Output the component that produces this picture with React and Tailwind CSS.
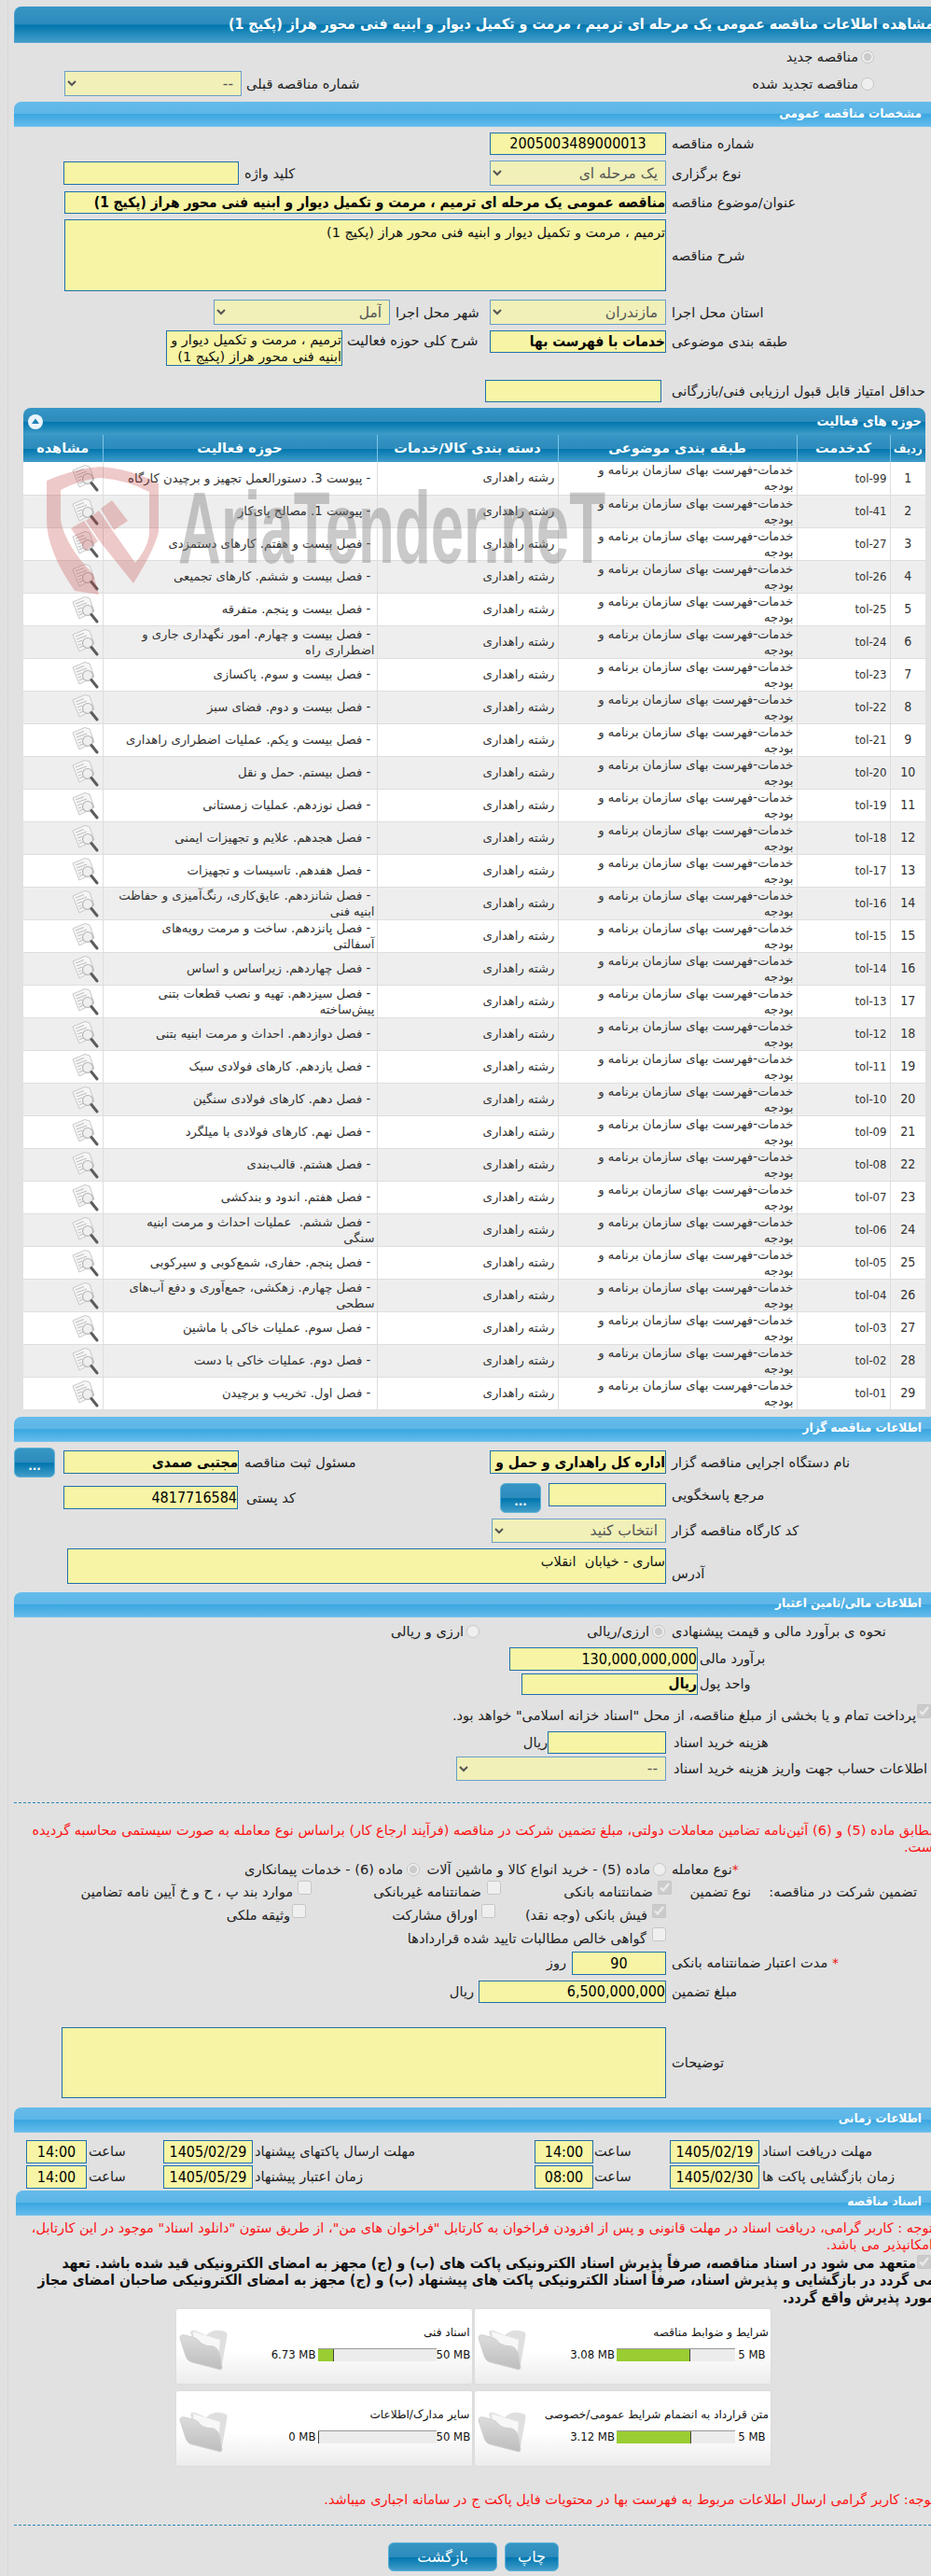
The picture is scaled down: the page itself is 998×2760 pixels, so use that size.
import { useState } from "react";

const rows = [
  ["tol-99", "پیوست 3. دستورالعمل تجهیز و برچیدن کارگاه"],
  ["tol-41", "پیوست 1. مصالح پای‌کار"],
  ["tol-27", "فصل بیست و هفتم. کارهای دستمزدی"],
  ["tol-26", "فصل بیست و ششم. کارهای تجمیعی"],
  ["tol-25", "فصل بیست و پنجم. متفرقه"],
  ["tol-24", "فصل بیست و چهارم. امور نگهداری جاری و\nاضطراری راه"],
  ["tol-23", "فصل بیست و سوم. پاکسازی"],
  ["tol-22", "فصل بیست و دوم. فضای سبز"],
  ["tol-21", "فصل بیست و یکم. عملیات اضطراری راهداری"],
  ["tol-20", "فصل بیستم. حمل و نقل"],
  ["tol-19", "فصل نوزدهم. عملیات زمستانی"],
  ["tol-18", "فصل هجدهم. علایم و تجهیزات ایمنی"],
  ["tol-17", "فصل هفدهم. تاسیسات و تجهیزات"],
  ["tol-16", "فصل شانزدهم. عایق‌کاری، رنگ‌آمیزی و حفاظت\nابنیه فنی"],
  ["tol-15", "فصل پانزدهم. ساخت و مرمت رویه‌های\nآسفالتی"],
  ["tol-14", "فصل چهاردهم. زیراساس و اساس"],
  ["tol-13", "فصل سیزدهم. تهیه و نصب قطعات بتنی\nپیش‌ساخته"],
  ["tol-12", "فصل دوازدهم. احداث و مرمت ابنیه بتنی"],
  ["tol-11", "فصل یازدهم. کارهای فولادی سبک"],
  ["tol-10", "فصل دهم. کارهای فولادی سنگین"],
  ["tol-09", "فصل نهم. کارهای فولادی با میلگرد"],
  ["tol-08", "فصل هشتم. قالب‌بندی"],
  ["tol-07", "فصل هفتم. اندود و بندکشی"],
  ["tol-06", "فصل ششم.  عملیات احداث و مرمت ابنیه\nسنگی"],
  ["tol-05", "فصل پنجم. حفاری، شمع‌کوبی و سپرکوبی"],
  ["tol-04", "فصل چهارم. زهکشی، جمع‌آوری و دفع آب‌های\nسطحی"],
  ["tol-03", "فصل سوم. عملیات خاکی با ماشین"],
  ["tol-02", "فصل دوم. عملیات خاکی با دست"],
  ["tol-01", "فصل اول. تخریب و برچیدن"],
];

const cards = [
  ["شرایط و ضوابط مناقصه", "3.08 MB", "5 MB", 62],
  ["اسناد فنی", "6.73 MB", "50 MB", 14],
  ["متن قرارداد به انضمام شرایط عمومی/خصوصی", "3.12 MB", "5 MB", 63],
  ["سایر مدارک/اطلاعات", "0 MB", "50 MB", 0],
];

const darkBar =
  "bg-[linear-gradient(#3796c5_0%,#2c8bbb_50%,#0076ae_52%,#429dc9_100%)]";
const lightBar =
  "bg-[linear-gradient(#64bbeb_0%,#5db6e7_50%,#3ba7e0_52%,#63bbeb_100%)]";
const cond = "font-['DejaVu_Sans_Condensed','DejaVu_Sans',sans-serif]";

/* ---------------- SMALL PARTS ---------------- */
const Section = ({ title, className = "" }) => (
  <div
    className={`h-[27px] flex items-center pr-[10px] rounded-tl-[8px] border-b border-[#7cc4ea] text-white font-bold text-[13.4px] ${cond} ${lightBar} ${className}`}
  >
    {title}
  </div>
);

const Label = ({ className = "w-[278px]", children }) => (
  <div className={`shrink-0 text-left text-[#222] text-[14.6px] whitespace-nowrap ${className}`}>
    {children}
  </div>
);

const Field = ({ className = "", value = "", bold }) => (
  <input
    readOnly
    value={value}
    className={`shrink-0 px-0 bg-[#f7f5a5] border border-[#1f70aa] text-black outline-none ${cond} ${bold ? "font-bold text-[15.4px]" : "text-[16px]"} ${className}`}
  />
);

const Area = ({ className = "", value = "" }) => (
  <textarea
    readOnly
    value={value}
    className={`shrink-0 px-0 py-0 bg-[#f7f5a5] border border-[#1f70aa] text-[#111] text-[14.5px] leading-[18px] resize-none overflow-hidden outline-none ${className}`}
  />
);

const Choice = ({ value, className = "" }) => (
  <select
    disabled
    defaultValue={value}
    className={`shrink-0 bg-[#f0f0b8] border border-[#6a9ec8] text-[#555] text-[15.5px] px-[4px] opacity-100 ${className}`}
  >
    <option>{value}</option>
  </select>
);

const Dots = ({ className = "" }) => (
  <button
    className={`shrink-0 w-[44px] h-[32px] pt-[8px] rounded-[6px] border border-[#5ab0d8] text-white font-bold text-[12px] ${darkBar} ${className}`}
  >
    ...
  </button>
);

const Radio = ({ checked, className = "" }) => (
  <input type="radio" disabled checked={!!checked} readOnly className={`shrink-0 m-0 w-[14px] h-[14px] ${className}`} />
);

const Check = ({ checked, className = "" }) => (
  <input type="checkbox" disabled checked={!!checked} readOnly className={`shrink-0 m-0 w-[15px] h-[15px] ${className}`} />
);

const Star = () => <span className="text-[#e11] text-[14px]">*</span>;

const ViewIcon = () => (
  <svg width="31" height="30" viewBox="0 0 31 30">
    <path d="M2 7 L15 1.5 L20 3 L25 17 L9 25 Z" fill="#f6f6f6" stroke="#c8c8c8" />
    <path d="M5 9 L14 5.5 M6 12 L17 8 M7 15 L12 13 M8 18 L11 17 M9 21 L13 19" stroke="#c2c2c2" strokeWidth="1.2" />
    <circle cx="18" cy="16" r="5.5" fill="#ececec" fillOpacity="0.75" stroke="#b4b4b4" strokeWidth="1.2" />
    <path d="M22 20.5 L28 28" stroke="#5c5c5c" strokeWidth="3" strokeLinecap="round" />
  </svg>
);

const FolderIcon = () => (
  <svg width="54" height="50" viewBox="0 0 54 50">
    <defs>
      <linearGradient id="folderGrad" x1="0" y1="0" x2="0" y2="1">
        <stop offset="0" stopColor="#dcdcdc" />
        <stop offset="1" stopColor="#bdbdbd" />
      </linearGradient>
    </defs>
    <path d="M12 9 Q13 6 17 7 L29 12 Q33 8 38 7 Q44 6 51 9 Q52 12 51 15 L46 44 L20 30 Z" fill="#dfdfdf" />
    <path d="M15 8 L44 17 L42 38 L17 28 Z" fill="#f7f7f7" />
    <path d="M1 15 Q1 11 6 12 L14 14 Q20 15 24 21 Q29 24 37 24 Q42 26 44 34 L46 47 Q45 50 41 48 L14 41 Q9 40 7 34 Z" fill="url(#folderGrad)" stroke="#cfcfcf" />
  </svg>
);

const FileCard = ({ title, used, max, percent }) => (
  <div className="w-[317px] h-[80px] flex rounded-[2px] bg-[linear-gradient(#ffffff_55%,#ececec_100%)] shadow-[0_0_2px_#cfcfcf]">
    <div className="flex-1 pr-[2px]">
      <div className="mt-[16px] h-[18px] leading-[18px] text-[12.1px] text-[#111] whitespace-nowrap">{title}</div>
      <div className={`mt-[5px] flex items-center text-[13px] text-[#111] ${cond}`}>
        <span className="w-[36px] text-center whitespace-nowrap" dir="ltr">{max}</span>
        <div className="w-[127px] h-[14px] bg-[#ececec] border-t border-[#999]" dir="ltr">
          <div style={{ width: `${percent}%` }} className="h-full bg-[#9acd32] border-r border-[#444] min-w-[1px]" />
        </div>
        <span className="mr-[2px] whitespace-nowrap" dir="ltr">{used}</span>
      </div>
    </div>
    <div className="w-[58px] pt-[16px] pl-[3px] shrink-0 flex justify-end">
      <FolderIcon />
    </div>
  </div>
);

const TimeRow = ({ first, second, d1, t1, d2, t2, className = "" }) => (
  <div className={`flex items-center h-[25px] ${className}`}>
    <Label className="w-[181px]">{first}</Label>
    <Field value={d1} className="mr-[3px] w-[96px] h-full text-center" />
    <Label className="w-[78px] mr-[3px]">ساعت</Label>
    <Field value={t1} className="w-[63px] h-full mr-[1px] text-center" />
    <Label className="w-[298px] mr-[2px]">{second}</Label>
    <Field value={d2} className="mr-[2px] w-[96px] h-full text-center" />
    <Label className="w-[78px] mr-[2px]">ساعت</Label>
    <Field value={t2} className="w-[65px] h-full mr-[2px] text-center" />
  </div>
);

/* ---------------- WATERMARK ---------------- */
const Watermark = () => (
  <>
    <svg className="absolute left-[-5px] top-[53px] pointer-events-none" width="180" height="160" viewBox="0 0 180 160">
      <g fill="#c43c3c" opacity="0.27">
        <path d="M30 25 Q60 12 87 10 Q120 12 150 28 L150 80 Q145 100 123 135 L87 90 L101 79 L125 113 Q140 95 140 80 L140 37 Q115 24 88 22 Q65 24 45 35 L45 67 Q50 95 80 125 L86 147 L60 143 Q30 100 30 67 Z" />
        <path d="M88 55 L100 46 L117 68 L102 78 Z" />
        <path d="M72 68 L86 57 L101 79 L87 90 Z" />
        <path d="M56 76 L70 68 L85 90 L72 100 Z" />
      </g>
    </svg>
    <svg className="absolute left-[160px] top-[70px] pointer-events-none" width="480" height="110" viewBox="0 0 480 110">
      <text
        x="6"
        y="96"
        textLength="458"
        lengthAdjust="spacingAndGlyphs"
        fontSize="110"
        fontWeight="700"
        fontFamily="'Liberation Sans', sans-serif"
        fill="#777"
        opacity="0.38"
        className="[direction:ltr]"
      >
        AriaTender.neT
      </text>
    </svg>
  </>
);

/* ---------------- PAGE ---------------- */
export default function App() {
  const [open] = useState(true);

  return (
    <div
      dir="rtl"
      className="relative w-[998px] h-[2760px] overflow-hidden bg-[#e1e1e1] font-['DejaVu_Sans',sans-serif]"
    >
      <div className="absolute left-[8px] top-0 bottom-0 border-l border-dotted border-[#cfcfcf]" />

      <div className="ml-[15px] w-[983px] pt-[7px]">
        {/* TITLE */}
        <div className={`h-[39px] flex items-center -mr-[3px] rounded-tl-[8px] border-l border-b border-[#4f9fd0] text-white font-bold text-[15.9px] whitespace-nowrap ${cond} ${darkBar}`}>
          مشاهده اطلاعات مناقصه عمومی یک مرحله ای ترمیم ، مرمت و تکمیل دیوار و ابنیه فنی محور هراز (پکیج 1)
        </div>

        {/* TYPE */}
        <div className="h-[30px] flex items-center mr-[61px] text-[14.6px] text-[#222]">
          <Radio checked />
          <span className="mr-[3px]">مناقصه جدید</span>
        </div>
        <div className="h-[27px] flex items-center mr-[61px] text-[14.6px] text-[#222]">
          <Radio />
          <span className="mr-[3px] w-[530px]">مناقصه تجدید شده</span>
          <Label className="w-[126px]">شماره مناقصه قبلی</Label>
          <Choice value="--" className="mr-[5px] w-[190px] h-full" />
        </div>

        {/* GENERAL */}
        <Section title="مشخصات مناقصه عمومی" className="mt-[6px]" />

        <div className="mt-[6px] h-[24px] flex">
          <Label className="w-[278px] leading-[24px]">شماره مناقصه</Label>
          <Field value="2005003489000013" className="mr-[6px] w-[189px] text-center" />
        </div>
        <div className="mt-[6px] h-[27px] flex items-center">
          <Label>نوع برگزاری</Label>
          <Choice value="یک مرحله ای" className="mr-[6px] w-[189px] h-full" />
          <Label className="w-[263px]">کلید واژه</Label>
          <Field className="mr-[6px] w-[188px] h-[25px]" />
        </div>
        <div className="mt-[6px] h-[24px] flex items-center">
          <Label>عنوان/موضوع مناقصه</Label>
          <Field
            bold
            value="مناقصه عمومی یک مرحله ای ترمیم ، مرمت و تکمیل دیوار و ابنیه فنی محور هراز (پکیج 1)"
            className="mr-[6px] w-[645px] h-full"
          />
        </div>
        <div className="mt-[6px] h-[77px] flex items-center">
          <Label>شرح مناقصه</Label>
          <Area value="ترمیم ، مرمت و تکمیل دیوار و ابنیه فنی محور هراز (پکیج 1)" className="mr-[6px] w-[645px] h-full pt-[4px]" />
        </div>
        <div className="mt-[9px] h-[27px] flex items-center">
          <Label>استان محل اجرا</Label>
          <Choice value="مازندران" className="mr-[6px] w-[189px] h-full" />
          <Label className="w-[101px]">شهر محل اجرا</Label>
          <Choice value="آمل" className="mr-[6px] w-[189px] h-full" />
        </div>
        <div className="mt-[6px] h-[38px] flex items-start">
          <Label className="w-[278px] leading-[24px]">طبقه بندی موضوعی</Label>
          <Field bold value="خدمات با فهرست بها" className="mr-[6px] w-[189px] h-[24px]" />
          <Label className="w-[153px] leading-[22px]">شرح کلی حوزه فعالیت</Label>
          <Area value="ترمیم ، مرمت و تکمیل دیوار و ابنیه فنی محور هراز (پکیج 1)" className="mr-[5px] w-[189px] h-full" />
        </div>
        <div className="mt-[15px] h-[24px] flex items-center">
          <Label>حداقل امتیاز قابل قبول ارزیابی فنی/بازرگانی</Label>
          <Field className="mr-[11px] w-[189px] h-full" />
        </div>

        {/* ACTIVITIES */}
        <div className="relative mt-[6px] ml-[10px] mr-[6px] rounded-t-[8px] rounded-b-[6px] bg-[#d4e6f3]">
          <div className={`h-[29px] flex items-center justify-between pr-[4px] pl-[5px] rounded-t-[8px] text-white font-bold text-[14.5px] ${cond} ${darkBar}`}>
            <span>حوزه های فعالیت</span>
            <svg width="16" height="16" viewBox="0 0 16 16">
              <circle cx="8" cy="8" r="8" fill="#eaf4fa" />
              <path d="M8 4.5 L12 10 L4 10 Z" fill="#1f7fb4" />
            </svg>
          </div>
          {open && (
            <table className="w-full table-fixed border-collapse text-[13.2px] text-[#333]">
              <colgroup>
                <col className="w-[38px]" />
                <col className="w-[100px]" />
                <col className="w-[256px]" />
                <col className="w-[194px]" />
                <col className="w-[294px]" />
                <col />
              </colgroup>
              <thead>
                <tr className={`h-[29px] text-white font-bold text-[14.5px] ${darkBar}`}>
                  <th className={`border-l border-[#7cc3e8] ${cond} text-[13px]`}>ردیف</th>
                  <th className="border-l border-[#7cc3e8]">کدخدمت</th>
                  <th className="border-l border-[#7cc3e8]">طبقه بندی موضوعی</th>
                  <th className="border-l border-[#7cc3e8]">دسته بندی کالا/خدمات</th>
                  <th className="border-l border-[#7cc3e8]">حوزه فعالیت</th>
                  <th>مشاهده</th>
                </tr>
              </thead>
              <tbody>
                {rows.map(([code, name], i) => (
                  <tr key={code} className={`h-[35px] border-b border-[#dedede] ${i % 2 ? "bg-[#eeeeee]" : "bg-white"}`}>
                    <td className={`border-l border-[#dedede] text-center ${cond} text-[14px]`}>{i + 1}</td>
                    <td className={`border-l border-[#dedede] pr-[3px] ${cond} text-[13px]`}>{code}</td>
                    <td className="border-l border-[#dedede] pr-[3px] pl-[30px] leading-[17px]">خدمات-فهرست بهای سازمان برنامه و بودجه</td>
                    <td className="border-l border-[#dedede] pr-[3px]">رشته راهداری</td>
                    <td className="border-l border-[#dedede] pr-[2px] leading-[17px] whitespace-pre-wrap">{"\u00A0- " + name}</td>
                    <td>
                      <div className="flex justify-start pr-[3px]">
                        <ViewIcon />
                      </div>
                    </td>
                  </tr>
                ))}
              </tbody>
            </table>
          )}
          <Watermark />
        </div>

        {/* BUYER */}
        <Section title="اطلاعات مناقصه گزار" className="mt-[7px]" />
        <div className="mt-[6px] h-[32px] flex items-center">
          <Label>نام دستگاه اجرایی مناقصه گزار</Label>
          <Field bold value="اداره کل راهداری و حمل و نقل جاده ای استان مازندران" className="mr-[6px] w-[189px] h-[25px]" />
          <Label className="w-[263px]">مسئول ثبت مناقصه</Label>
          <Field bold value="مجتبی صمدی" className="mr-[6px] w-[188px] h-[25px]" />
          <Dots className="mr-[9px]" />
        </div>
        <div className="mt-[6px] h-[32px] flex items-start">
          <Label className="w-[278px] leading-[25px]">مرجع پاسخگویی</Label>
          <Field className="mr-[6px] w-[126px] h-[25px]" />
          <Dots className="mr-[8px]" />
          <Label className="w-[271px] leading-[32px] mr-[1px]">کد پستی</Label>
          <Field value="4817716584" className="mt-[3px] mr-[9px] w-[187px] h-[25px]" />
        </div>
        <div className="mt-[6px] h-[26px] flex items-center">
          <Label>کد کارگاه مناقصه گزار</Label>
          <Choice value="انتخاب کنید" className="mr-[6px] w-[187px] h-full" />
        </div>
        <div className="mt-[6px] h-[38px] flex items-end">
          <Label>آدرس</Label>
          <Area value="ساری - خیابان  انقلاب" className="mr-[6px] w-[642px] h-full pt-[4px]" />
        </div>

        {/* FINANCE */}
        <Section title="اطلاعات مالی/تامین اعتبار" className="mt-[9px]" />
        <div className="mt-[2px] h-[26px] flex items-center text-[14.6px] text-[#222]">
          <Label>نحوه ی برآورد مالی و قیمت پیشنهادی</Label>
          <Radio checked className="mr-[7px]" />
          <span className="mr-[3px] w-[182px]">ارزی/ریالی</span>
          <Radio />
          <span className="mr-[3px]">ارزی و ریالی</span>
        </div>
        <div className="mt-[4px] h-[25px] flex items-center">
          <Label className="w-[248px]">برآورد مالی</Label>
          <Field value="130,000,000,000" className="mr-[2px] w-[202px] h-full" />
        </div>
        <div className="mt-[3px] h-[23px] flex items-center">
          <Label className="w-[248px]">واحد پول</Label>
          <Field bold value="ریال" className="mr-[2px] w-[189px] h-full" />
        </div>
        <div className="mt-[10px] h-[24px] flex items-center text-[14.6px] text-[#222]">
          <Check checked className="self-start" />
          <span className="mr-[1px]">
            پرداخت تمام و یا بخشی از مبلغ مناقصه، از محل "اسناد خزانه اسلامی" خواهد بود.
          </span>
        </div>
        <div className="mt-[5px] h-[24px] flex items-center">
          <Label className="w-[276px]">هزینه خرید اسناد</Label>
          <Field className="mr-[8px] w-[127px] h-full" />
          <span className="text-[14.6px] text-[#222]">ریال</span>
        </div>
        <div className="mt-[3px] h-[26px] flex items-center">
          <Label className="w-[276px]">اطلاعات حساب جهت واریز هزینه خرید اسناد</Label>
          <Choice value="--" className="mr-[8px] w-[225px] h-full" />
        </div>

        <div className="mt-[23px] border-t border-dashed border-[#2a86b8]" />

        <p className="mt-[20px] -mr-[6px] ml-[9px] text-[#f11] text-[14.5px] leading-[18px]">
          مطابق ماده (5) و (6) آئین‌نامه تضامین معاملات دولتی، مبلغ تضمین شرکت در مناقصه (فرآیند ارجاع کار) براساس نوع معامله به صورت سیستمی محاسبه گردیده است.
        </p>

        <div className="mt-[5px] h-[20px] flex items-center text-[14.6px] text-[#222]">
          <Label className="w-[278px] pr-[204px]">
            <Star />
            نوع معامله
          </Label>
          <Radio className="mr-[6px]" />
          <span className="mr-[3px] w-[240px]">ماده (5) - خرید انواع کالا و ماشین آلات</span>
          <Radio checked className="mr-[7px]" />
          <span className="mr-[4px]">ماده (6) - خدمات پیمانکاری</span>
        </div>
        <div className="mt-[2px] h-[24px] flex items-center text-[14.6px] text-[#222]">
          <span className="w-[178px] mr-[15px]">تضمین شرکت در مناقصه:</span>
          <span className="w-[85px]">نوع تضمین</span>
          <Check checked className="self-start" />
          <span className="mr-[5px] w-[163px]">ضمانتنامه بانکی</span>
          <Check className="self-start" />
          <span className="mr-[6px] w-[182px]">ضمانتنامه غیربانکی</span>
          <Check className="self-start" />
          <span className="mr-[5px] whitespace-nowrap">موارد بند پ ، ح و خ آیین نامه تضامین</span>
        </div>
        <div className="mt-[1px] h-[24px] flex items-center text-[14.6px] text-[#222]">
          <Check checked className="mr-[284px] self-start" />
          <span className="mr-[5px] w-[163px]">فیش بانکی (وجه نقد)</span>
          <Check className="self-start" />
          <span className="mr-[4px] w-[184px]">اوراق مشارکت</span>
          <Check className="self-start" />
          <span className="mr-[2px]">وثیقه ملکی</span>
        </div>
        <div className="mt-[1px] h-[24px] flex items-center text-[14.6px] text-[#222]">
          <Check className="mr-[284px] self-start" />
          <span className="mr-[6px]">گواهی خالص مطالبات تایید شده قراردادها</span>
        </div>
        <div className="mt-[2px] h-[25px] flex items-center">
          <Label className="w-[278px] pr-[98px]">
            <Star /> مدت اعتبار ضمانتنامه بانکی
          </Label>
          <Field value="90" className="mr-[6px] w-[101px] h-full text-center" />
          <span className="mr-[6px] text-[14.6px] text-[#222]">روز</span>
        </div>
        <div className="mt-[6px] h-[24px] flex items-center">
          <Label>مبلغ تضمین</Label>
          <Field value="6,500,000,000" className="mr-[6px] w-[201px] h-full" />
          <span className="mr-[5px] text-[14.6px] text-[#222]">ریال</span>
        </div>
        <div className="mt-[26px] h-[76px] flex items-center">
          <Label>توضیحات</Label>
          <Area className="mr-[6px] w-[648px] h-full" />
        </div>

        {/* TIMES */}
        <Section title="اطلاعات زمانی" className="mt-[10px]" />
        <TimeRow
          className="mt-[8px]"
          first="مهلت دریافت اسناد"
          second="مهلت ارسال پاکتهای پیشنهاد"
          d1="1405/02/19"
          t1="14:00"
          d2="1405/02/29"
          t2="14:00"
        />
        <TimeRow
          className="mt-[2px]"
          first="زمان بازگشایی پاکت ها"
          second="زمان اعتبار پیشنهاد"
          d1="1405/02/30"
          t1="08:00"
          d2="1405/05/29"
          t2="14:00"
        />

        {/* DOCUMENTS */}
        <Section title="اسناد مناقصه" className="mt-[2px] ml-[2px]" />
        <p className="mt-[4px] -mr-[2px] ml-[12px] text-[#f11] text-[14.5px] leading-[18px]">
          توجه : کاربر گرامی، دریافت اسناد در مهلت قانونی و پس از افزودن فراخوان به کارتابل "فراخوان های من"، از طریق ستون "دانلود اسناد" موجود در این کارتابل، امکانپذیر می باشد.
        </p>
        <div className="relative mt-[2px] -mr-[4px]">
          <Check checked className="absolute right-[4px] top-[0px]" />
          <p className={`text-[#111] font-bold text-[15.6px] leading-[18.5px] whitespace-pre indent-[20px] ${cond}`}>
            {"متعهد می شود در اسناد مناقصه، صرفاً پذیرش اسناد الکترونیکی پاکت های (ب) و (ج) مجهز به امضای الکترونیکی قید شده باشد. تعهد\nمی گردد در بازگشایی و پذیرش اسناد، صرفاً اسناد الکترونیکی پاکت های پیشنهاد (ب) و (ج) مجهز به امضای الکترونیکی صاحبان امضای مجاز\nمورد پذیرش واقع گردد."}
          </p>
        </div>
        <div className="mt-[3px] mr-[172px] w-[637px] grid grid-cols-2 gap-x-[4px] gap-y-[8px]">
          {cards.map((c) => (
            <FileCard key={c[0]} title={c[0]} used={c[1]} max={c[2]} percent={c[3]} />
          ))}
        </div>

        <p className="mt-[27px] -mr-[4px] text-[#f11] text-[14.5px] leading-[18px] whitespace-nowrap">
          توجه: کاربر گرامی ارسال اطلاعات مربوط به فهرست بها در محتویات فایل پاکت ج در سامانه اجباری میباشد.
        </p>
        <div className="mt-[18px] border-t border-dashed border-[#2a86b8]" />
        <div className="mt-[18px] mr-[399px] flex gap-[8px]">
          <button className={`w-[58px] h-[31px] rounded-[6px] border border-[#5ab0d8] text-white text-[16px] ${darkBar}`}>چاپ</button>
          <button className={`w-[117px] h-[31px] rounded-[6px] border border-[#5ab0d8] text-white text-[16px] ${darkBar}`}>بازگشت</button>
        </div>
      </div>
    </div>
  );
}
